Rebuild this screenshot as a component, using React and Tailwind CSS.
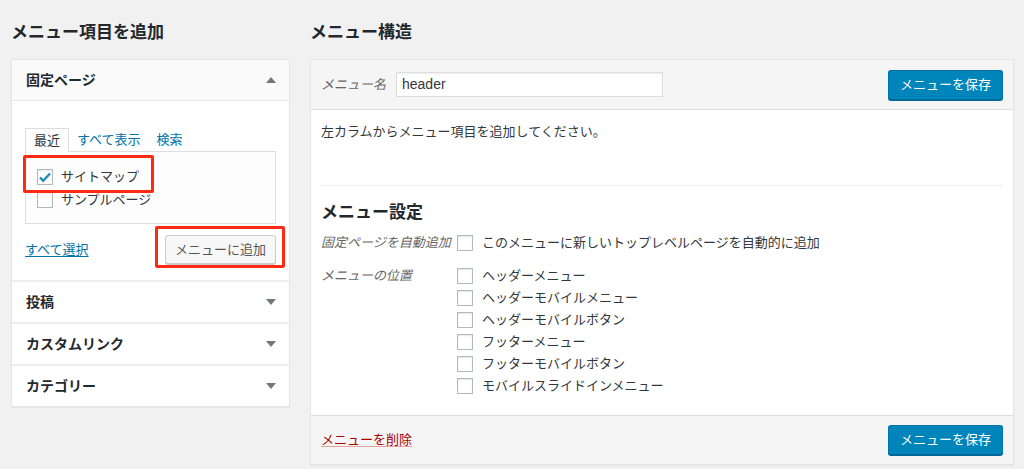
import React from "react";

const font = "font-['Liberation_Sans','Noto_Sans_CJK_JP',sans-serif]";

const Arrow = ({ up }) => (
  <svg width="10" height="6" viewBox="0 0 10 6" className="text-[#72777c]">
    {up ? <path d="M5 0L10 6H0z" fill="currentColor" /> : <path d="M0 0h10L5 6z" fill="currentColor" />}
  </svg>
);

const Checkbox = ({ checked }) => (
  <span className="flex h-4 w-4 shrink-0 items-center justify-center border border-[#b4b9be] bg-white shadow-[inset_0_1px_2px_rgba(0,0,0,0.1)]">
    {checked && (
      <svg width="14" height="12" viewBox="0 0 14 12">
        <path d="M2 6.5l3.2 3.2L12 2.5" fill="none" stroke="#1e8cbe" strokeWidth="2.4" />
      </svg>
    )}
  </span>
);

const SaveButton = () => (
  <button className="h-[30px] rounded-[3px] border border-[#0073aa] border-b-[#006799] bg-[#0085ba] px-[11px] text-[13px] leading-[28px] text-white shadow-[0_1px_0_#006799]">
    メニューを保存
  </button>
);

const sections = ["投稿", "カスタムリンク", "カテゴリー"];
const locations = [
  "ヘッダーメニュー",
  "ヘッダーモバイルメニュー",
  "ヘッダーモバイルボタン",
  "フッターメニュー",
  "フッターモバイルボタン",
  "モバイルスライドインメニュー",
];

export default function App() {
  return (
    <div className={`${font} flex min-h-[469px] gap-5 bg-[#f1f1f1] pl-[11px] pr-[10px] pt-[22px] text-[13px] text-[#444]`}>
      {/* left column */}
      <div className="w-[279px] shrink-0">
        <h3 className="h-[22px] text-[17px] font-bold leading-[22px] text-[#23282d]">メニュー項目を追加</h3>
        <div className="relative mt-[15px] border border-[#e5e5e5] bg-white shadow-[0_1px_1px_rgba(0,0,0,0.04)]">
          <div className="flex h-[41px] items-center justify-between border-b border-[#e5e5e5] bg-[#fafafa] pl-[14px] pr-[13px]">
            <span className="text-[14px] font-bold text-[#23282d]">固定ページ</span>
            <Arrow up />
          </div>
          <div className="px-[13px] pb-[16px] pt-[27px]">
            <div className="flex items-end text-[13px] leading-[23px]">
              <span className="relative -mb-px border border-b-0 border-[#dddddd] bg-[#fdfdfd] px-2 text-[#32373c]">最近</span>
              <span className="px-2 text-[#0073aa]">すべて表示</span>
              <span className="px-2 text-[#0073aa]">検索</span>
            </div>
            <div className="border border-[#dddddd] bg-[#fdfdfd] px-[11px] pb-[12px] pt-[13px]">
              <label className="flex h-[23px] items-center gap-[8px] text-[#32373c]">
                <Checkbox checked />
                サイトマップ
              </label>
              <label className="flex h-[23px] items-center gap-[8px] text-[#32373c]">
                <Checkbox />
                サンプルページ
              </label>
            </div>
            <div className="mt-[11px] flex items-center justify-between">
              <a className="text-[#0073aa] underline underline-offset-2">すべて選択</a>
              <button className="h-[29px] rounded-[3px] border border-[#cccccc] bg-[#f7f7f7] px-[9px] text-[13px] text-[#555] shadow-[0_1px_0_#cccccc]">
                メニューに追加
              </button>
            </div>
          </div>
          {sections.map((s) => (
            <div key={s} className="flex h-[42px] items-center justify-between border-t-2 border-[#eeeeee] pl-[14px] pr-[13px]">
              <span className="text-[14px] font-bold text-[#23282d]">{s}</span>
              <Arrow />
            </div>
          ))}
          {/* annotation boxes */}
          <div className="pointer-events-none absolute left-[11px] top-[95px] h-[38px] w-[131px] rounded-[2px] border-[3px] border-[#ff2a12]" />
          <div className="pointer-events-none absolute left-[143px] top-[166px] h-[42px] w-[130px] rounded-[2px] border-[3px] border-[#ff2a12]" />
        </div>
      </div>

      {/* right column */}
      <div className="flex-1">
        <h3 className="h-[22px] text-[17px] font-bold leading-[22px] text-[#23282d]">メニュー構造</h3>
        <div className="mt-[15px] border border-[#e5e5e5] bg-white shadow-[0_1px_1px_rgba(0,0,0,0.04)]">
          <div className="flex h-[50px] items-center border-b border-[#dfdfdf] bg-[#f5f5f5] px-[10px]">
            <span className="italic text-[#666]">メニュー名</span>
            <div className="ml-[10px] flex h-[25px] w-[267px] items-center border border-[#dddddd] bg-white pl-[5px] text-[14px] text-[#32373c] shadow-[inset_0_1px_2px_rgba(0,0,0,0.07)]">
              header
            </div>
            <div className="ml-auto">
              <SaveButton />
            </div>
          </div>
          <div className="px-[10px] pb-[18px] pt-[12px]">
            <p className="leading-[20px] text-[#32373c]">左カラムからメニュー項目を追加してください。</p>
            <div className="mt-[43px] border-t border-[#eeeeee]" />
            <h3 className="mt-[15px] text-[17px] font-bold leading-[24px] text-[#23282d]">メニュー設定</h3>
            <div className="mt-[7px] flex h-[22px] items-center">
              <span className="w-[136px] italic text-[#666]">固定ページを自動追加</span>
              <Checkbox />
              <span className="ml-[9px] text-[#32373c]">このメニューに新しいトップレベルページを自動的に追加</span>
            </div>
            <div className="mt-[11px] flex">
              <span className="flex h-[22px] w-[136px] items-center italic text-[#666]">メニューの位置</span>
              <div>
                {locations.map((l) => (
                  <div key={l} className="flex h-[22px] items-center">
                    <Checkbox />
                    <span className="ml-[9px] text-[#32373c]">{l}</span>
                  </div>
                ))}
              </div>
            </div>
          </div>
          <div className="flex h-[49px] items-center justify-between border-t border-[#dddddd] bg-[#f5f5f5] px-[10px]">
            <a className="text-[#a00] underline decoration-[#e0a0a0] underline-offset-2">メニューを削除</a>
            <SaveButton />
          </div>
        </div>
      </div>
    </div>
  );
}
